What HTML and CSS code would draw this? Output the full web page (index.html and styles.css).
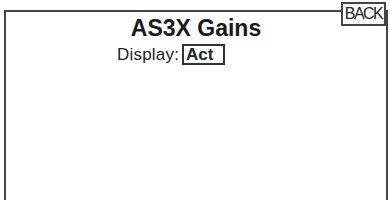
FILE: index.html
```html
<!DOCTYPE html>
<html lang="en">
<head>
  <meta charset="UTF-8">
  <meta name="viewport" content="width=device-width, initial-scale=1.0">
  <title>AS3X Gains</title>
  <link rel="stylesheet" href="styles.css">
</head>
<body>
  <!-- screen frame -->
  <div class="screen">
    <span class="back-btn">BACK</span>
    <div class="title">AS3X Gains</div>
    <div class="row">
      <span class="label">Display:</span>
      <span class="value">Act</span>
    </div>
  </div>
</body>
</html>
```
FILE: styles.css
```css
body { margin: 0; background: #fff; font-family: "Liberation Sans", Arial, sans-serif; color: #222; overflow: hidden; }
/* screen frame */
.screen { position: relative; margin: 10px 0 0 4px; width: 380px; height: 188px; border: 2px solid #444; border-bottom: none; }
.back-btn { position: absolute; top: -10px; right: 0; width: 41px; height: 20px; border: 2px solid #444; background: #fff; font-size: 16px; line-height: 20px; text-align: center; letter-spacing: -1.5px; }
/* title */
.title { text-align: center; font-size: 23px; font-weight: bold; margin-top: 3px; line-height: 26px; color: #1a1a1a; }
/* display row */
.row { display: flex; align-items: center; padding-left: 111px; margin-top: 3px; font-size: 17px; }
.label { letter-spacing: 0.2px; }
.value { margin-left: 3px; border: 2px solid #333; width: 37px; height: 17px; line-height: 17px; padding-left: 2px; font-weight: bold; }
```
